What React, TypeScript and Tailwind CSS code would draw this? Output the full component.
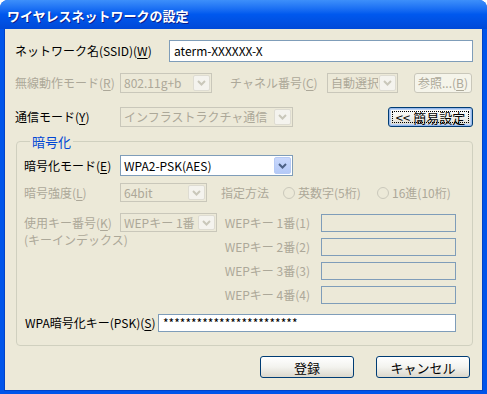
import clsx from "clsx";

const font = "font-['MS_UI_Gothic','Noto_Sans_CJK_JP',sans-serif]";

function Acc({ k }: { k: string }) {
  return (
    <span>
      (<span className="underline underline-offset-2">{k}</span>)
    </span>
  );
}

function Chevron({ disabled }: { disabled?: boolean }) {
  return (
    <svg width="9" height="6" viewBox="0 0 9 6">
      <path
        d="M1 1 L4.5 4.5 L8 1"
        fill="none"
        stroke={disabled ? "#C9C7BA" : "#4D6185"}
        strokeWidth="2"
      />
    </svg>
  );
}

function Combo({
  className,
  value,
  disabled,
}: {
  className: string;
  value: string;
  disabled?: boolean;
}) {
  return (
    <div
      className={clsx(
        "flex shrink-0 items-stretch border",
        disabled
          ? "border-[#C9C7BA] text-[#ACA899]"
          : "border-[#7F9DB9] bg-white text-black",
        className
      )}
    >
      <span className="flex flex-1 items-center truncate pl-[3px]">{value}</span>
      <span
        className={clsx(
          "m-[1px] flex w-[17px] items-center justify-center rounded-[2px] border",
          disabled
            ? "border-[#DEDCD2] bg-[#F4F3EE]"
            : "border-[#B6CAF5] bg-gradient-to-b from-[#C9D8FC] to-[#B4C9F7]"
        )}
      >
        <Chevron disabled={disabled} />
      </span>
    </div>
  );
}

function TextBox({ className, value }: { className: string; value?: string }) {
  return (
    <div
      className={clsx(
        "flex shrink-0 items-center border border-[#7F9DB9] pl-[4px]",
        className
      )}
    >
      {value}
    </div>
  );
}

function Radio({ label }: { label: string }) {
  return (
    <span className="flex items-center gap-[3px] text-[#ACA899]">
      <span className="h-[12px] w-[12px] rounded-full border border-[#CAC8BB]" />
      {label}
    </span>
  );
}

function XpButton({
  children,
  className,
  disabled,
  focused,
}: {
  children: React.ReactNode;
  className: string;
  disabled?: boolean;
  focused?: boolean;
}) {
  return (
    <div
      className={clsx(
        "flex shrink-0 items-center justify-center rounded-[3px] border",
        disabled
          ? "border-[#C9C7BA] bg-[#F5F4EA] text-[#ACA899]"
          : "border-[#003C74] bg-gradient-to-b from-[#FFFFFF] via-[#F3F3EF] to-[#DCD8CC] text-black",
        focused && "shadow-[inset_0_0_0_1px_#98B8EA,inset_0_0_0_2px_#BCD4F6]",
        className
      )}
    >
      {focused ? (
        <span className="flex h-[calc(100%-6px)] w-[calc(100%-6px)] items-center justify-center border border-dotted border-black">
          {children}
        </span>
      ) : (
        children
      )}
    </div>
  );
}

export default function App() {
  return (
    <div className={clsx("h-[394px] w-[487px] text-[12px] leading-none text-black", font)}>
      <div className="flex h-full w-full flex-col overflow-hidden rounded-t-[8px] bg-[#0055EA]">
        {/* title bar */}
        <div className="flex h-[29px] shrink-0 items-center bg-gradient-to-b from-[#3D8FFA] via-[#0058EE] to-[#0049D8] pl-[7px] pt-[1px]">
          <span className="text-[13px] font-bold text-white [text-shadow:1px_1px_0_#0A1E8C]">
            ワイヤレスネットワークの設定
          </span>
        </div>

        <div className="mb-[3px] ml-[4px] mr-[4px] flex flex-1 flex-col border-l border-r border-b border-[#0043C8] bg-[#ECE9D8] pl-[10px] pt-[11px]">
          {/* SSID */}
          <div className="flex h-[22px] items-center">
            <span className="w-[154px]">
              ネットワーク名(SSID)<Acc k="W" />
            </span>
            <TextBox className="h-[22px] w-[304px] bg-white" value="aterm-XXXXXX-X" />
          </div>

          {/* mode / channel */}
          <div className="mt-[11px] flex h-[20px] items-center text-[#ACA899]">
            <span className="w-[105px]">
              無線動作モード<Acc k="R" />
            </span>
            <Combo className="h-[20px] w-[92px]" value="802.11g+b" disabled />
            <span className="ml-[18px] w-[97px]">
              チャネル番号<Acc k="C" />
            </span>
            <Combo className="h-[20px] w-[71px]" value="自動選択" disabled />
            <XpButton className="ml-[16px] h-[20px] w-[58px]" disabled>
              参照...<Acc k="B" />
            </XpButton>
          </div>

          {/* communication mode */}
          <div className="mt-[14px] flex h-[20px] items-center">
            <span className="w-[105px]">
              通信モード<Acc k="Y" />
            </span>
            <Combo className="h-[20px] w-[173px]" value="インフラストラクチャ通信" disabled />
            <XpButton className="ml-[95px] h-[20px] w-[85px] text-[13px]" focused>
              &lt;&lt; 簡易設定
            </XpButton>
          </div>

          {/* encryption group */}
          <fieldset className="ml-[1px] mt-[8px] w-[457px] rounded-[4px] border border-[#D0D0BF] pb-[13px] pl-[7px]">
            <legend className="ml-[6px] px-[2px] text-[13px] text-[#0046D5]">暗号化</legend>

            <div className="mt-[7px] flex h-[21px] items-center">
              <span className="w-[96px]">
                暗号化モード<Acc k="E" />
              </span>
              <Combo className="h-[21px] w-[173px]" value="WPA2-PSK(AES)" />
            </div>

            <div className="mt-[7px] flex h-[19px] items-center text-[#ACA899]">
              <span className="w-[96px]">
                暗号強度<Acc k="L" />
              </span>
              <Combo className="h-[19px] w-[87px]" value="64bit" disabled />
              <span className="ml-[14px] w-[62px]">指定方法</span>
              <span className="w-[94px]">
                <Radio label="英数字(5桁)" />
              </span>
              <Radio label="16進(10桁)" />
            </div>

            <div className="mt-[11px] flex items-start text-[#ACA899]">
              <div className="flex w-[96px] shrink-0 flex-col gap-[5px] whitespace-nowrap pt-[4px]">
                <span>
                  使用キー番号<Acc k="K" />
                </span>
                <span>(キーインデックス)</span>
              </div>
              <Combo className="h-[19px] w-[97px]" value="WEPキー 1番" disabled />
              <div className="flex flex-col gap-[6px] pt-[1px]">
                {["1", "2", "3", "4"].map((n) => (
                  <div key={n} className="flex h-[18px] items-center">
                    <span className="w-[104px] pr-[11px] text-right">
                      WEPキー {n}番({n})
                    </span>
                    <TextBox className="h-[18px] w-[135px]" />
                  </div>
                ))}
              </div>
            </div>

            <div className="mt-[10px] flex h-[18px] items-center">
              <span className="ml-[1px] w-[133px]">
                WPA暗号化キー(PSK)<Acc k="S" />
              </span>
              <TextBox
                className="h-[18px] w-[298px] bg-white"
                value="************************"
              />
            </div>
          </fieldset>

          {/* buttons */}
          <div className="mt-[10px] flex justify-end gap-[22px] pr-[12px]">
            <XpButton className="h-[22px] w-[94px] text-[13px]">登録</XpButton>
            <XpButton className="h-[22px] w-[94px] text-[13px]">キャンセル</XpButton>
          </div>
        </div>
      </div>
    </div>
  );
}
